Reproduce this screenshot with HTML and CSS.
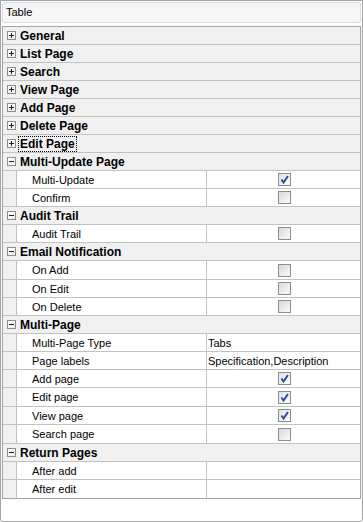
FILE: index.html
```html
<!DOCTYPE html>
<html>
<head>
<meta charset="utf-8">
<link rel="stylesheet" href="styles.css">
</head>
<body>
<div class="frame">
  <div class="title">Table</div>
  <div class="grid">
    <div class="cat"><span class="tog"><span class="h"></span><span class="v"></span></span><span class="label">General</span></div>
    <div class="cat"><span class="tog"><span class="h"></span><span class="v"></span></span><span class="label">List Page</span></div>
    <div class="cat"><span class="tog"><span class="h"></span><span class="v"></span></span><span class="label">Search</span></div>
    <div class="cat"><span class="tog"><span class="h"></span><span class="v"></span></span><span class="label">View Page</span></div>
    <div class="cat"><span class="tog"><span class="h"></span><span class="v"></span></span><span class="label">Add Page</span></div>
    <div class="cat"><span class="tog"><span class="h"></span><span class="v"></span></span><span class="label">Delete Page</span></div>
    <div class="cat"><span class="tog"><span class="h"></span><span class="v"></span></span><span class="label focus">Edit Page</span></div>

    <div class="cat"><span class="tog"><span class="h"></span></span><span class="label">Multi-Update Page</span></div>
    <div class="prop"><span class="gut"></span><span class="name">Multi-Update</span><span class="val"><span class="cb checked"><svg viewBox="0 0 11 11" width="11" height="11"><polyline points="2.5,5.5 4.5,8.5 9,2" fill="none" stroke="#2b4aa6" stroke-width="2"/></svg></span></span></div>
    <div class="prop"><span class="gut"></span><span class="name">Confirm</span><span class="val"><span class="cb"></span></span></div>

    <div class="cat"><span class="tog"><span class="h"></span></span><span class="label">Audit Trail</span></div>
    <div class="prop"><span class="gut"></span><span class="name">Audit Trail</span><span class="val"><span class="cb"></span></span></div>

    <div class="cat"><span class="tog"><span class="h"></span></span><span class="label">Email Notification</span></div>
    <div class="prop tall"><span class="gut"></span><span class="name">On Add</span><span class="val"><span class="cb"></span></span></div>
    <div class="prop"><span class="gut"></span><span class="name">On Edit</span><span class="val"><span class="cb"></span></span></div>
    <div class="prop"><span class="gut"></span><span class="name">On Delete</span><span class="val"><span class="cb"></span></span></div>

    <div class="cat"><span class="tog"><span class="h"></span></span><span class="label">Multi-Page</span></div>
    <div class="prop"><span class="gut"></span><span class="name">Multi-Page Type</span><span class="val text">Tabs</span></div>
    <div class="prop"><span class="gut"></span><span class="name">Page labels</span><span class="val text">Specification,Description</span></div>
    <div class="prop"><span class="gut"></span><span class="name">Add page</span><span class="val"><span class="cb checked"><svg viewBox="0 0 11 11" width="11" height="11"><polyline points="2.5,5.5 4.5,8.5 9,2" fill="none" stroke="#2b4aa6" stroke-width="2"/></svg></span></span></div>
    <div class="prop tall"><span class="gut"></span><span class="name">Edit page</span><span class="val"><span class="cb checked"><svg viewBox="0 0 11 11" width="11" height="11"><polyline points="2.5,5.5 4.5,8.5 9,2" fill="none" stroke="#2b4aa6" stroke-width="2"/></svg></span></span></div>
    <div class="prop"><span class="gut"></span><span class="name">View page</span><span class="val"><span class="cb checked"><svg viewBox="0 0 11 11" width="11" height="11"><polyline points="2.5,5.5 4.5,8.5 9,2" fill="none" stroke="#2b4aa6" stroke-width="2"/></svg></span></span></div>
    <div class="prop tall"><span class="gut"></span><span class="name">Search page</span><span class="val"><span class="cb"></span></span></div>

    <div class="cat"><span class="tog"><span class="h"></span></span><span class="label">Return Pages</span></div>
    <div class="prop"><span class="gut"></span><span class="name">After add</span><span class="val text"></span></div>
    <div class="prop tall last"><span class="gut"></span><span class="name">After edit</span><span class="val text"></span></div>
  </div>
</div>
</body>
</html>
```

FILE: styles.css
```css
html, body {
  margin: 0;
  padding: 0;
  background: #ffffff;
}

body {
  font-family: "Liberation Sans", Arial, sans-serif;
  font-size: 11px;
  color: #000;
}

.frame {
  box-sizing: border-box;
  width: 363px;
  height: 522px;
  border: 1px solid #a3a3a3;
  border-radius: 0 0 3px 3px;
  padding: 1px;
  background: #fff;
}

.title {
  box-sizing: border-box;
  height: 21px;
  margin-bottom: 3px;
  border: 1px solid #d4dce4;
  border-radius: 2px;
  background: #f6f6f6;
  padding-left: 3px;
  line-height: 19px;
  font-size: 11px;
}

.grid {
  border: 1px solid #a3a3a3;
  border-bottom: none;
}

.cat,
.prop {
  box-sizing: border-box;
  height: 18px;
  border-bottom: 1px solid #c2c2c2;
  display: flex;
  align-items: center;
}

.prop.tall {
  height: 19px;
}

.prop.last {
  border-bottom: 1px solid #a3a3a3;
}

.cat {
  background: #f0f0f0;
  font-weight: bold;
  font-size: 12px;
}

.tog {
  position: relative;
  box-sizing: border-box;
  width: 9px;
  height: 9px;
  margin-left: 4px;
  border: 1px solid #8d8d8d;
  background: linear-gradient(135deg, #ffffff 0%, #eeeeee 100%);
  flex: none;
}

.tog .h {
  position: absolute;
  left: 1px;
  top: 3px;
  width: 5px;
  height: 1px;
  background: #222;
}

.tog .v {
  position: absolute;
  left: 3px;
  top: 1px;
  width: 1px;
  height: 5px;
  background: #222;
}

.label {
  margin-left: 4px;
  line-height: 14px;
  padding: 0 1px 0 0;
}

.label.focus {
  outline: 1px dotted #000;
  outline-offset: 0;
  margin-left: 3px;
  padding-left: 1px;
}

.gut {
  box-sizing: border-box;
  width: 14px;
  height: 100%;
  background: #f0f0f0;
  border-right: 1px solid #c2c2c2;
  flex: none;
}

.name {
  box-sizing: border-box;
  width: 190px;
  height: 100%;
  padding-left: 15px;
  border-right: 1px solid #c2c2c2;
  display: flex;
  align-items: center;
  flex: none;
  background: #fff;
}

.val {
  flex: 1;
  height: 100%;
  display: flex;
  align-items: center;
  justify-content: center;
  background: #fff;
}

.val.text {
  justify-content: flex-start;
  padding-left: 1px;
}

.cb {
  box-sizing: border-box;
  width: 13px;
  height: 13px;
  border: 1px solid #8c8c8c;
  background: linear-gradient(135deg, #d8d8d8 0%, #ececec 55%, #fbfbfb 100%);
  display: flex;
  align-items: center;
  justify-content: center;
  margin-left: 1px;
}

.cb.checked {
  background: linear-gradient(135deg, #e2e2e2 0%, #f2f2f2 60%, #fdfdfd 100%);
}

.cb svg {
  display: block;
}
```
